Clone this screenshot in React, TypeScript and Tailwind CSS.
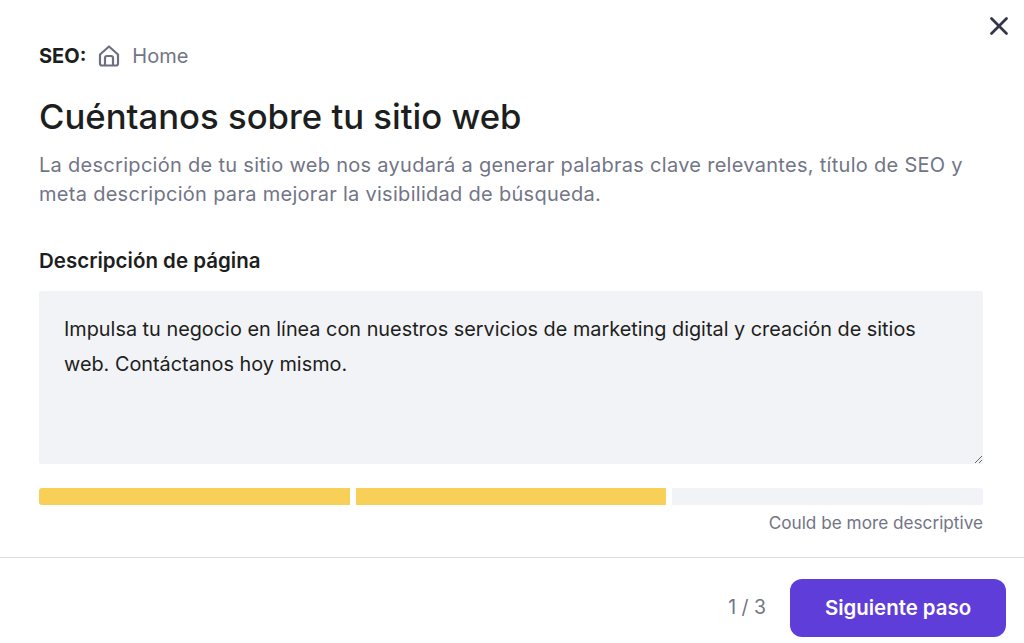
import { useState } from "react";
import { X } from "lucide-react";

const HomeIcon = () => (
    <svg width="24" height="24" viewBox="0 0 24 24" fill="none" stroke="#6d7081" strokeWidth="2.2" strokeLinejoin="round">
        <path d="M3 10.5 12 2.5l9 8V19.5a2 2 0 0 1-2 2H5a2 2 0 0 1-2-2z" />
        <path d="M8 21.5V14a2 2 0 0 1 2-2h4a2 2 0 0 1 2 2v7.5" />
    </svg>
);

const App = () => {
    const [description, setDescription] = useState(
        "Impulsa tu negocio en línea con nuestros servicios de marketing digital y creación de sitios web. Contáctanos hoy mismo."
    );

    return (
        <div className="relative flex h-[643px] w-[1024px] flex-col overflow-hidden bg-white font-['Inter',sans-serif] text-[#1d1e20]">
            <button className="absolute right-[10px] top-[11px]">
                <X size={30} strokeWidth={2.2} className="text-[#36344d]" />
            </button>

            <div className="flex-1 pl-[39px] pr-[41px] pt-[42px]">
                <div className="flex h-[28px] items-center text-[20px]">
                    <span className="font-bold">SEO:</span>
                    <span className="ml-[11px]"><HomeIcon /></span>
                    <span className="ml-[11px] text-[#727586]">Home</span>
                </div>

                <h1 className="mt-[24px] text-[34.7px] font-medium leading-[44px]">
                    Cuéntanos sobre tu sitio web
                </h1>

                <p className="mt-[13px] text-[20px] leading-[29px] tracking-[0.29px] text-[#727586]">
                    La descripción de tu sitio web nos ayudará a generar palabras clave relevantes, título de SEO y meta descripción para mejorar la visibilidad de búsqueda.
                </p>

                <label className="mt-[38px] block text-[20.5px] font-semibold leading-[28px]">
                    Descripción de página
                </label>

                <textarea
                    value={description}
                    onChange={(e) => setDescription(e.target.value)}
                    className="mt-[16px] block h-[173px] w-[944px] rounded-[2px] bg-[#f2f3f6] pb-[20px] pl-[25px] pr-[24px] pt-[21px] text-[19.85px] leading-[35px] outline-none"
                />

                <div className="mt-[24px] flex gap-[6px]">
                    <div className="h-[17px] flex-1 rounded-l-[3px] bg-[#f8cf57]" />
                    <div className="h-[17px] flex-1 bg-[#f8cf57]" />
                    <div className="h-[17px] flex-1 rounded-r-[3px] bg-[#f2f3f6]" />
                </div>

                <div className="mt-[7px] text-right text-[17.2px] leading-[22px] text-[#727586]">
                    Could be more descriptive
                </div>
            </div>

            <div className="flex h-[86px] items-start justify-end gap-[24px] border-t border-[#dadce0] pr-[18px] pt-[21px]">
                <span className="mt-[14px] text-[19.4px] leading-[28px] text-[#727586]">1 / 3</span>
                <button className="h-[58px] w-[216px] rounded-[12px] bg-[#5f3dd9] text-[20.4px] font-semibold text-white">
                    Siguiente paso
                </button>
            </div>
        </div>
    );
};

export default App;
